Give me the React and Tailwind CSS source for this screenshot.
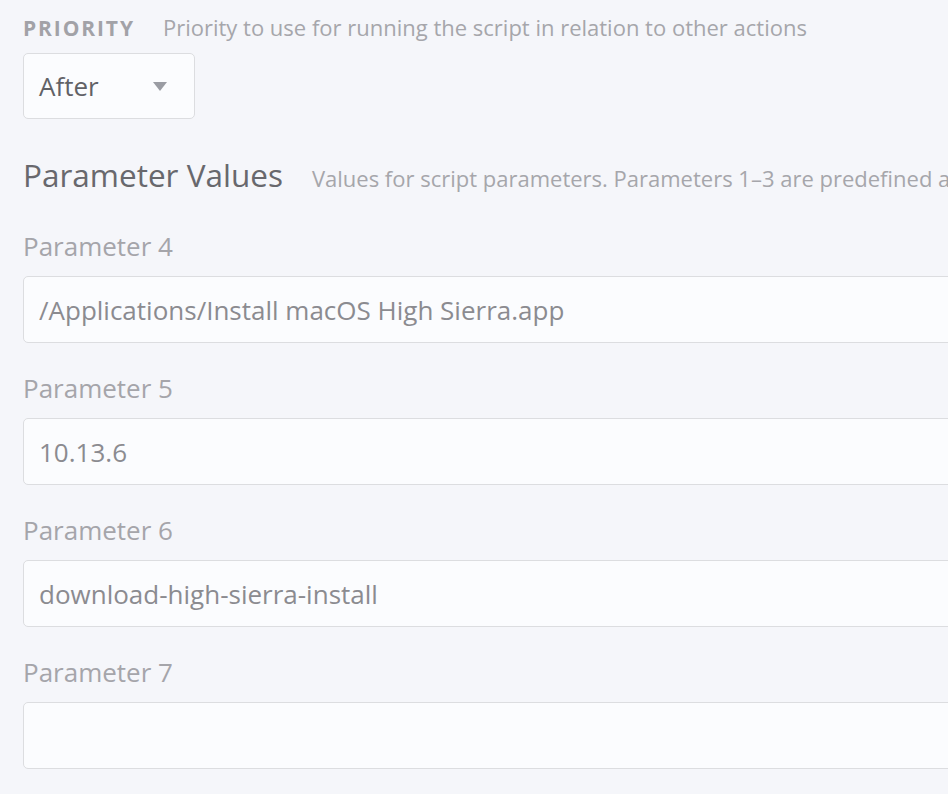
import React from 'react';

const params = [
  { label: 'Parameter 4', value: '/Applications/Install macOS High Sierra.app' },
  { label: 'Parameter 5', value: '10.13.6' },
  { label: 'Parameter 6', value: 'download-high-sierra-install' },
  { label: 'Parameter 7', value: '' },
];

export default function App() {
  return (
    <div
      className="w-[948px] h-[794px] overflow-hidden bg-[#f5f6fa] pl-[23px]"
      style={{ fontFamily: '"Open Sans", Lato, sans-serif' }}
    >
      {/* priority */}
      <div className="flex items-baseline pt-[12px] whitespace-nowrap leading-[30px]">
        <span className="text-[21px] font-bold tracking-[0.09em] text-[#a2a2a7]">PRIORITY</span>
        <span className="ml-[28px] text-[22px] text-[#a6a6ab]">
          Priority to use for running the script in relation to other actions
        </span>
      </div>

      <div className="mt-[10px] w-[172px] h-[66px] rounded-[5px] border border-[#dcdde0] bg-[#fbfcfe] flex items-center pl-[15px]">
        <span className="text-[26px] leading-[30px] text-[#616166]">After</span>
        <svg className="ml-auto mr-[27px]" width="14" height="9" viewBox="0 0 14 9">
          <path d="M0 0h14L7 9z" fill="#9a9ca3" />
        </svg>
      </div>

      {/* parameter values */}
      <div className="flex items-baseline mt-[36px] whitespace-nowrap">
        <span className="text-[31.5px] leading-[40px] text-[#68686d]">Parameter Values</span>
        <span className="ml-[29px] text-[22px] text-[#a6a6ab]">
          Values for script parameters. Parameters 1–3 are predefined as mount point, computer name, and username
        </span>
      </div>

      <div className="mt-[36px] flex flex-col gap-[30px]">
        {params.map((p) => (
          <div key={p.label} className="flex flex-col">
            <span className="text-[26px] leading-[30px] text-[#a5a5aa]">{p.label}</span>
            <div className="mt-[15px] w-[1000px] h-[67px] rounded-[5px] border border-[#dcdde0] bg-[#fbfcfe] flex items-center pl-[15px]">
              <span className="text-[26px] leading-[30px] text-[#8b8b90] whitespace-nowrap">{p.value}</span>
            </div>
          </div>
        ))}
      </div>
    </div>
  );
}
